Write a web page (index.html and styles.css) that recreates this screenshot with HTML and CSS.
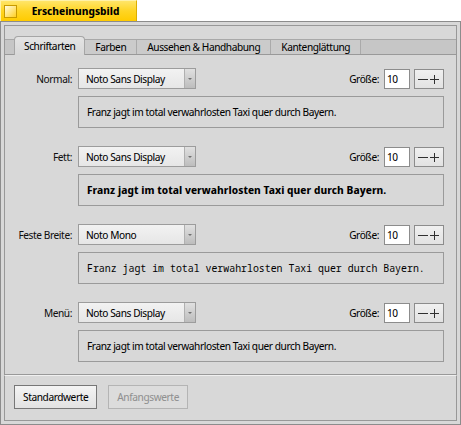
FILE: index.html
```html
<!DOCTYPE html>
<html lang="de">
<head>
<meta charset="utf-8">
<title>Erscheinungsbild</title>
<link rel="stylesheet" href="styles.css">
</head>
<body>
<div class="titletab">
  <span class="closebox"></span>
  <span class="title">Erscheinungsbild</span>
</div>
<div class="window">
  <div class="tabview">
    <div class="tabbar">
      <div class="tab active">Schriftarten</div>
      <div class="tab">Farben</div>
      <div class="tab">Aussehen &amp; Handhabung</div>
      <div class="tab">Kantenglättung</div>
    </div>
    <div class="tabcontent">
      <div class="fontrow">
        <div class="controls">
          <span class="label">Normal:</span>
          <div class="menufield"><span class="menutext">Noto Sans Display</span><span class="menuarrow"></span></div>
          <span class="sizelabel">Größe:</span>
          <div class="sizeinput">10</div>
          <div class="spin"><svg width="24" height="10" viewBox="0 0 24 10"><path d="M1 5.5h10M13 5.5h9M17.5 1v9" stroke="#303030" stroke-width="1" fill="none"/></svg></div>
        </div>
        <div class="preview">Franz jagt im total verwahrlosten Taxi quer durch Bayern.</div>
      </div>
      <div class="fontrow">
        <div class="controls">
          <span class="label">Fett:</span>
          <div class="menufield"><span class="menutext">Noto Sans Display</span><span class="menuarrow"></span></div>
          <span class="sizelabel">Größe:</span>
          <div class="sizeinput">10</div>
          <div class="spin"><svg width="24" height="10" viewBox="0 0 24 10"><path d="M1 5.5h10M13 5.5h9M17.5 1v9" stroke="#303030" stroke-width="1" fill="none"/></svg></div>
        </div>
        <div class="preview bold">Franz jagt im total verwahrlosten Taxi quer durch Bayern.</div>
      </div>
      <div class="fontrow">
        <div class="controls">
          <span class="label">Feste Breite:</span>
          <div class="menufield"><span class="menutext">Noto Mono</span><span class="menuarrow"></span></div>
          <span class="sizelabel">Größe:</span>
          <div class="sizeinput">10</div>
          <div class="spin"><svg width="24" height="10" viewBox="0 0 24 10"><path d="M1 5.5h10M13 5.5h9M17.5 1v9" stroke="#303030" stroke-width="1" fill="none"/></svg></div>
        </div>
        <div class="preview mono">Franz jagt im total verwahrlosten Taxi quer durch Bayern.</div>
      </div>
      <div class="fontrow">
        <div class="controls">
          <span class="label">Menü:</span>
          <div class="menufield"><span class="menutext">Noto Sans Display</span><span class="menuarrow"></span></div>
          <span class="sizelabel">Größe:</span>
          <div class="sizeinput">10</div>
          <div class="spin"><svg width="24" height="10" viewBox="0 0 24 10"><path d="M1 5.5h10M13 5.5h9M17.5 1v9" stroke="#303030" stroke-width="1" fill="none"/></svg></div>
        </div>
        <div class="preview">Franz jagt im total verwahrlosten Taxi quer durch Bayern.</div>
      </div>
    </div>
  </div>
  <div class="buttonbar">
    <div class="button">Standardwerte</div>
    <div class="button disabled">Anfangswerte</div>
  </div>
</div>
</body>
</html>
```
FILE: styles.css
```css
* { box-sizing: border-box; }
html, body { margin: 0; padding: 0; }
body {
  background: #ffffff;
  width: 461px;
  height: 425px;
  font-family: "Noto Sans Display", "Noto Sans", sans-serif;
  font-size: 10.75px;
  letter-spacing: -0.42px;
  color: #000;
  overflow: hidden;
}

.titletab {
  width: 137px;
  height: 21px;
  display: flex;
  align-items: center;
  background: linear-gradient(#ffe569, #ffd524 50%, #ffcb00);
  border: 1px solid #dcae00;
  border-bottom: none;
  border-top-color: #fff2a8;
  border-left-color: #fff2a8;
}
.closebox {
  width: 13px;
  height: 13px;
  margin-left: 3px;
  border: 1px solid #c89a00;
  background: linear-gradient(135deg, #fffbe2, #ffe47a 55%, #ffcf20);
}
.title {
  flex: 1;
  text-align: center;
  font-weight: bold;
  letter-spacing: 0;
  padding-right: 2px;
}

.window {
  width: 461px;
  height: 404px;
  border: 1px solid #8c8c8c;
  background: #d8d8d8;
  padding: 3px;
  display: flex;
  flex-direction: column;
}
.tabview, .buttonbar { border-left: 1px solid #989898; border-right: 1px solid #989898; }

.tabview {
  display: flex;
  flex-direction: column;
  border-top: 1px solid #989898;
  background: #d8d8d8;
  padding-top: 10px;
}
.tabbar {
  display: flex;
  align-items: flex-end;
  height: 19px;
  background: linear-gradient(#d8d8d8 0, #d8d8d8 3px, #a8a8a8 3px, #a8a8a8 4px, #c6c6c6 4px, #c6c6c6 18px, #999 18px);
  padding-left: 9px;
}
.tab {
  height: 14px;
  margin-bottom: 1px;
  padding: 0 10px;
  display: flex;
  align-items: center;
  border-right: 1px solid #aaaaaa;
  background: #cbcbcb;
  color: #000;
}
.tab.active {
  height: 19px;
  margin-bottom: 0;
  padding: 0 9px 1px;
  background: linear-gradient(#e4e4e4, #d8d8d8);
  border: 1px solid #a6a6a6;
  border-bottom: none;
  border-radius: 4px 4px 0 0;
}

.tabcontent {
  height: 320px;
  padding: 13px 12px 0 0;
  border-bottom: 1px solid #999;
  display: flex;
  flex-direction: column;
  gap: 18px;
}
.fontrow {
  display: flex;
  flex-direction: column;
  gap: 7px;
}
.controls {
  display: flex;
  align-items: center;
  height: 21px;
}
.label {
  width: 67px;
  text-align: right;
  margin-right: 6px;
  color: #101010;
}
.menufield {
  width: 118px;
  height: 21px;
  display: flex;
  border: 1px solid #9c9c9c;
  background: linear-gradient(#f2f2f2, #e6e6e6);
}
.menutext {
  flex: 1;
  padding-left: 7px;
  display: flex;
  align-items: center;
}
.menuarrow {
  width: 11px;
  border-left: 1px solid #b0b0b0;
  background: linear-gradient(#e0e0e0, #bdbdbd);
  position: relative;
}
.menuarrow::after {
  content: "";
  position: absolute;
  left: 3px;
  top: 9px;
  border-left: 2px solid transparent;
  border-right: 2px solid transparent;
  border-top: 2px solid #707070;
}
.sizelabel { margin-left: auto; margin-right: 5px; }
.sizeinput {
  width: 26px;
  height: 20px;
  background: #fff;
  border: 1px solid #8c8c8c;
  padding-left: 2px;
  display: flex;
  align-items: center;
}
.spin {
  width: 30px;
  height: 20px;
  margin-left: 4px;
  border: 1px solid #8c8c8c;
  background: linear-gradient(#f0f0f0, #e2e2e2);
  display: flex;
  align-items: center;
  justify-content: center;
}
.spin svg { display: block; }
.preview {
  margin-left: 73px;
  height: 32px;
  border: 1px solid #9a9a9a;
  padding-left: 8px;
  display: flex;
  align-items: center;
}
.preview.bold { font-weight: bold; letter-spacing: 0.06px; }
.preview.mono { font-family: "Noto Sans Mono", "DejaVu Sans Mono", monospace; font-size: 9.9px; letter-spacing: 0; }

.buttonbar {
  flex: 1;
  border-top: 1px solid #f0f0f0;
  border-bottom: 1px solid #989898;
  padding: 9px 9px 0;
  display: flex;
  gap: 11px;
  align-items: flex-start;
}
.button {
  height: 24px;
  padding: 0 8px;
  display: flex;
  align-items: center;
  border: 1px solid #777;
  background: linear-gradient(#f4f4f4, #e2e2e2);
  color: #000;
}
.button.disabled {
  color: #909090;
  border-color: #b4b4b4;
  background: #dcdcdc;
  padding: 0 8px;
}
```
